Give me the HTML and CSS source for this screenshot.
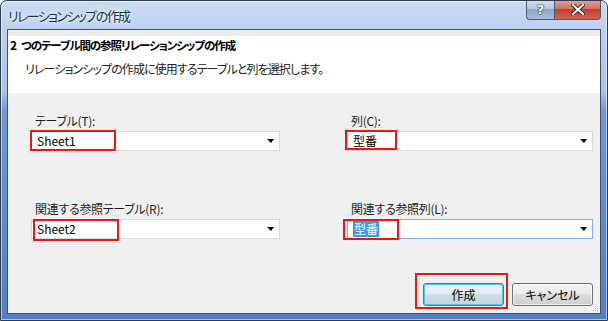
FILE: index.html
```html
<!DOCTYPE html>
<html lang="ja">
<head>
    <meta charset="UTF-8">
    <title>リレーションシップの作成</title>
    <link rel="stylesheet" href="styles.css">
</head>
<body>

<div class="window">
    <!-- Title bar -->
    <div class="titlebar">
        <span class="title">リレーションシップの作成</span>
        <div class="caption">
            <span class="cap-btn cap-help">?</span>
            <span class="cap-btn cap-close">
                <svg width="14" height="11" viewBox="0 0 14 11">
                    <path d="M2 1 L12 10 M12 1 L2 10" stroke="#3b2a2a" stroke-width="4" stroke-linecap="square"/>
                    <path d="M2 1 L12 10 M12 1 L2 10" stroke="#fff" stroke-width="2" stroke-linecap="square"/>
                </svg>
            </span>
        </div>
    </div>

    <div class="client">
        <div class="header">
            <div class="header-title"><span class="num">2</span>つのテーブル間の参照リレーションシップの作成</div>
            <div class="header-desc">リレーションシップの作成に使用するテーブルと列を選択します。</div>
        </div>

        <div class="form">
            <div class="field">
                <div class="field-label">テーブル(T):</div>
                <div class="combo"><span class="combo-text">Sheet1</span><span class="combo-arrow"></span></div>
            </div>
            <div class="field">
                <div class="field-label">列(C):</div>
                <div class="combo"><span class="combo-text">型番</span><span class="combo-arrow"></span></div>
            </div>
            <div class="field">
                <div class="field-label">関連する参照テーブル(R):</div>
                <div class="combo"><span class="combo-text">Sheet2</span><span class="combo-arrow"></span></div>
            </div>
            <div class="field">
                <div class="field-label">関連する参照列(L):</div>
                <div class="combo combo-focus"><span class="combo-text"><span class="selected">型番</span></span><span class="combo-arrow"></span></div>
            </div>
        </div>

        <div class="actions">
            <button class="btn btn-default">作成</button>
            <button class="btn">キャンセル</button>
        </div>

        <svg class="grip" width="6" height="6" viewBox="0 0 6 6">
            <rect x="4" y="0" width="1" height="1" fill="#b8b8b8"/>
            <rect x="2" y="2" width="1" height="1" fill="#b8b8b8"/>
            <rect x="4" y="2" width="1" height="1" fill="#b8b8b8"/>
            <rect x="0" y="4" width="1" height="1" fill="#b8b8b8"/>
            <rect x="2" y="4" width="1" height="1" fill="#b8b8b8"/>
            <rect x="4" y="4" width="1" height="1" fill="#b8b8b8"/>
        </svg>
    </div>

    <!-- red annotation boxes -->
    <span class="mark mark-table"></span>
    <span class="mark mark-column"></span>
    <span class="mark mark-reftable"></span>
    <span class="mark mark-refcolumn"></span>
    <span class="mark mark-create"></span>
</div>

</body>
</html>
```

FILE: styles.css
```css
body {
    margin: 0;
    background-color: #fff;
    font-family: "Noto Sans CJK JP", "Noto Sans", sans-serif;
    font-size: 12px;
    font-feature-settings: "palt";
}
.window {
    position: relative;
    width: 608px;
    height: 321px;
    box-sizing: border-box;
    border: 1px solid #2b3b52;
    border-radius: 7px 7px 0 0;
    padding: 0 6px 6px 6px;
    display: flex;
    flex-direction: column;
    background: linear-gradient(to bottom, #c9dbf2 0, #bcd1ee 30px, #a9c3e8 90px, #6f98d4 110px, #4f7fc6 100%);
    box-shadow: inset 0 0 0 1px rgba(255, 255, 255, 0.55);
    overflow: hidden;
}
.titlebar {
    height: 28px;
    display: flex;
    align-items: center;
    justify-content: space-between;
}
.title {
    padding-left: 1px;
    font-size: 13px;
    letter-spacing: -1.6px;
    color: #1a2e4c;
    text-shadow: 0 0 6px #fff, 0 0 3px #fff;
}
.caption {
    align-self: flex-start;
    display: flex;
    margin-top: -1px;
}
.cap-btn {
    height: 20px;
    box-sizing: border-box;
    display: flex;
    align-items: center;
    justify-content: center;
    border: 1px solid #4b5a70;
    border-top: none;
}
.cap-help {
    width: 28px;
    border-right: none;
    border-radius: 0 0 0 4px;
    background: linear-gradient(to bottom, #d3dfee 0, #b7c8de 45%, #8ea5c3 50%, #a9bdd6 100%);
    color: #fff;
    font-family: "DejaVu Sans", sans-serif;
    font-weight: bold;
    font-size: 13px;
    text-shadow: 0 0 1px #2a3548, 0 0 1px #2a3548, 0 0 2px #2a3548;
}
.cap-close {
    width: 47px;
    border-radius: 0 0 4px 0;
    background: linear-gradient(to bottom, #e6a49a 0, #d5705f 45%, #c0402c 50%, #d4624f 100%);
}
.client {
    position: relative;
    flex: 1;
    display: flex;
    flex-direction: column;
    background-color: #f0f0f0;
    border: 1px solid #3c5274;
}
.header {
    height: 63px;
    box-sizing: border-box;
    border-top: 6px solid #ececec;
    background-color: #fff;
    padding: 1px 0 0 2px;
    line-height: 16px;
}
.header-title {
    font-weight: bold;
    font-size: 11.5px;
    letter-spacing: -1.1px;
    color: #000;
}
.num {
    font-size: 12px;
    margin-right: 5px;
}
.header-desc {
    margin-top: 8px;
    padding-left: 15px;
    letter-spacing: -0.9px;
    color: #222;
}
.form {
    display: grid;
    grid-template-columns: 249px 246px;
    column-gap: 67px;
    row-gap: 50px;
    padding: 20px 0 0 23px;
}
.field-label {
    line-height: 16px;
    padding-left: 4px;
    margin-bottom: 2px;
    letter-spacing: -0.3px;
    color: #1e1e1e;
}
.combo {
    height: 20px;
    box-sizing: border-box;
    border: 1px solid #dadada;
    background-color: #fff;
    display: flex;
    align-items: center;
    justify-content: space-between;
    padding: 0 5px 0 5px;
}
.combo-focus {
    border-color: #7eb4ea;
}
.combo-text {
    line-height: 14px;
    color: #000;
}
.selected {
    background-color: #3399ff;
    color: #fff;
    padding: 0 1px;
}
.combo-arrow {
    width: 0;
    height: 0;
    border-left: 4px solid transparent;
    border-right: 3px solid transparent;
    border-top: 4px solid #000;
}
.actions {
    margin-top: auto;
    display: flex;
    justify-content: flex-end;
    gap: 8px;
    padding: 0 7px 7px 0;
}
.btn {
    width: 81px;
    height: 23px;
    padding: 0;
    font-family: inherit;
    font-size: 12px;
    font-feature-settings: "palt";
    color: #000;
    border: 1px solid #707070;
    border-radius: 3px;
    background: linear-gradient(to bottom, #f2f2f2 0, #ebebeb 50%, #dddddd 50%, #cfcfcf 100%);
    box-shadow: inset 0 0 0 1px rgba(255, 255, 255, 0.7);
}
.btn-default {
    border-color: #3c7fb1;
    box-shadow: inset 0 0 0 1px #48c7f2;
    background: linear-gradient(to bottom, #eaf3f8 0, #e0ebf2 50%, #cfdde7 50%, #c2d3df 100%);
}
.grip {
    position: absolute;
    right: 1px;
    bottom: 1px;
}
.mark {
    position: absolute;
    box-sizing: border-box;
    border: 2px solid #f21414;
}
.mark-table {
    left: 29px;
    top: 129px;
    width: 86px;
    height: 21px;
}
.mark-column {
    left: 344px;
    top: 129px;
    width: 52px;
    height: 20px;
}
.mark-reftable {
    left: 32px;
    top: 218px;
    width: 86px;
    height: 22px;
}
.mark-refcolumn {
    left: 342px;
    top: 218px;
    width: 56px;
    height: 21px;
}
.mark-create {
    left: 414px;
    top: 272px;
    width: 93px;
    height: 36px;
}
```
